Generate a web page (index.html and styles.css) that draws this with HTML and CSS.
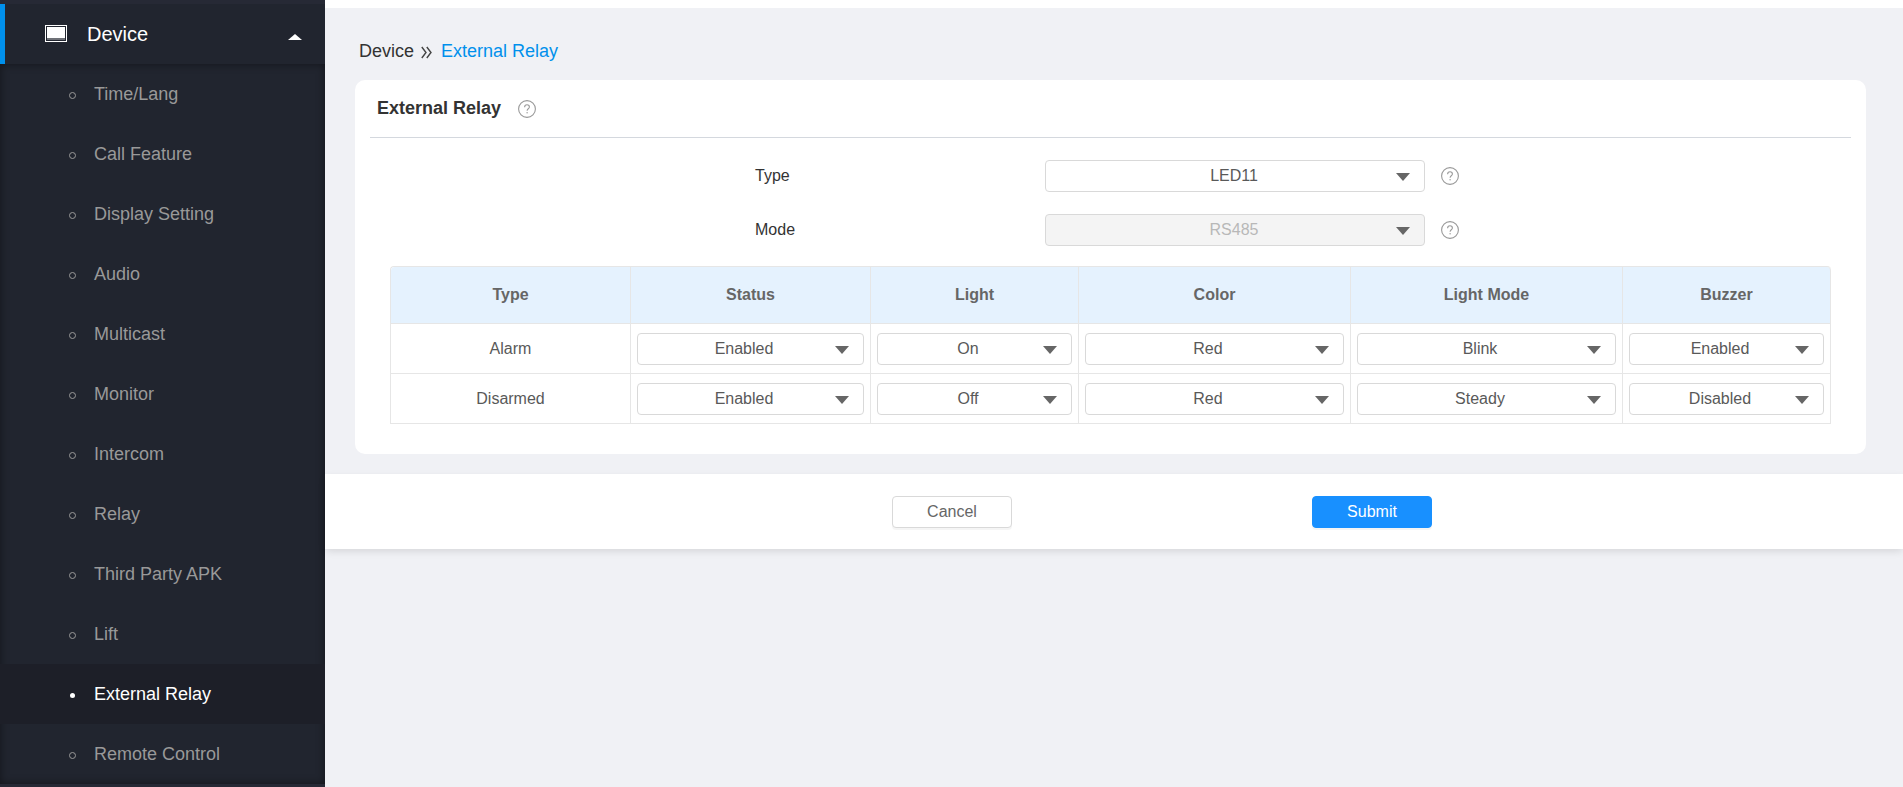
FILE: index.html
```html
<!DOCTYPE html>
<html lang="en">
<head>
  <meta charset="utf-8">
  <meta name="viewport" content="width=device-width, initial-scale=1">
  <title>External Relay</title>
  <link rel="stylesheet" href="styles.css">
</head>
<body>
  <svg class="defs" width="0" height="0">
    <symbol id="help" viewBox="0 0 18 18">
      <circle cx="9" cy="9" r="8.4" fill="none" stroke="#999" stroke-width="1.1"/>
      <path d="M6.6 7.2C6.6 5.6 7.6 4.8 9 4.8s2.4.9 2.4 2.2c0 1.7-2.3 1.9-2.3 3.8" fill="none" stroke="#999" stroke-width="1.1"/>
      <circle cx="9.1" cy="12.8" r=".7" fill="#999"/>
    </symbol>
  </svg>

  <aside class="sidebar">
    <div class="menu-title">
      <svg class="device-icon" width="22" height="17" viewBox="0 0 22 17">
        <rect x=".5" y=".5" width="21" height="16" fill="none" stroke="#fff"/>
        <rect x="2" y="2" width="18" height="11" fill="#fff"/>
        <path d="M2 14h18" stroke="#fff" stroke-opacity=".7"/>
      </svg>
      <span>Device</span>
      <i class="caret-up"></i>
    </div>
    <ul class="menu">
      <li>Time/Lang</li>
      <li>Call Feature</li>
      <li>Display Setting</li>
      <li>Audio</li>
      <li>Multicast</li>
      <li>Monitor</li>
      <li>Intercom</li>
      <li>Relay</li>
      <li>Third Party APK</li>
      <li>Lift</li>
      <li class="current">External Relay</li>
      <li>Remote Control</li>
    </ul>
  </aside>

  <main>
    <div class="topbar"></div>
    <nav class="breadcrumb">
      <span>Device</span>
      <svg width="11" height="13" viewBox="0 0 11 13"><path d="M.8 1l4.2 5.5L.8 12M5.8 1L10 6.5 5.8 12" fill="none" stroke="#444" stroke-width="1.4"/></svg>
      <a>External Relay</a>
    </nav>

    <section class="card">
      <header class="card-head">
        <h2>External Relay</h2>
        <svg class="help"><use href="#help"/></svg>
      </header>
      <div class="form-row">
        <label>Type</label>
        <div class="select"><span>LED11</span></div>
        <svg class="help"><use href="#help"/></svg>
      </div>
      <div class="form-row">
        <label>Mode</label>
        <div class="select disabled"><span>RS485</span></div>
        <svg class="help"><use href="#help"/></svg>
      </div>

      <table class="relay-table">
        <colgroup>
          <col class="w-240"><col class="w-240"><col class="w-208"><col class="w-272"><col class="w-272"><col class="w-208">
        </colgroup>
        <thead>
          <tr>
            <th>Type</th>
            <th>Status</th>
            <th>Light</th>
            <th>Color</th>
            <th>Light Mode</th>
            <th>Buzzer</th>
          </tr>
        </thead>
        <tbody>
          <tr>
            <td>Alarm</td>
            <td><div class="select"><span>Enabled</span></div></td>
            <td><div class="select"><span>On</span></div></td>
            <td><div class="select"><span>Red</span></div></td>
            <td><div class="select"><span>Blink</span></div></td>
            <td><div class="select"><span>Enabled</span></div></td>
          </tr>
          <tr>
            <td>Disarmed</td>
            <td><div class="select"><span>Enabled</span></div></td>
            <td><div class="select"><span>Off</span></div></td>
            <td><div class="select"><span>Red</span></div></td>
            <td><div class="select"><span>Steady</span></div></td>
            <td><div class="select"><span>Disabled</span></div></td>
          </tr>
        </tbody>
      </table>
    </section>

    <footer class="actions">
      <button class="btn">Cancel</button>
      <button class="btn primary">Submit</button>
    </footer>
  </main>
</body>
</html>
```
FILE: styles.css
```css
* {
  box-sizing: border-box;
}
body {
  display: flex;
  height: 100vh;
  margin: 0;
  overflow: hidden;
  background-color: #f0f1f5;
  color: #333;
  font-family: "Liberation Sans", Arial, sans-serif;
  font-size: 16px;
}
.defs {
  position: absolute;
}

/* sidebar */
.sidebar {
  flex: 0 0 325px;
  padding-top: 4px;
  background-color: #262935;
}
.menu-title {
  display: flex;
  align-items: center;
  height: 60px;
  padding: 0 23px 0 40px;
  border-left: 5px solid #0090ec;
  background-color: #21252f;
  color: #fff;
  font-size: 20px;
}
.menu-title span {
  margin-left: 20px;
}
.device-icon {
  margin-bottom: 2px;
}
.caret-up {
  margin: 5px 0 0 auto;
  border: 7px solid transparent;
  border-top: 0;
  border-bottom: 6px solid #fff;
}
.menu {
  margin: 0;
  padding: 0;
  list-style: none;
  background-color: #21252f;
  box-shadow: inset 0 0 9px rgba(0, 0, 0, 0.45);
}
.menu li {
  display: flex;
  align-items: center;
  height: 60px;
  padding-left: 69px;
  color: #999;
  font-size: 18px;
}
.menu li::before {
  content: "";
  width: 5px;
  height: 5px;
  margin: 3px 18px 0 0;
  border: 1px solid #999;
  border-radius: 50%;
}
.menu li.current {
  background-color: #1d1f28;
  color: #fff;
}
.menu li.current::before {
  border-color: transparent;
  background-color: #fff;
  background-clip: padding-box;
}

/* content */
main {
  flex: 1;
}
.topbar {
  height: 8px;
  background-color: #fff;
}
.breadcrumb {
  display: flex;
  align-items: center;
  height: 72px;
  padding: 30px 0 16px 34px;
  font-size: 18px;
}
.breadcrumb svg {
  margin: 2px 9px 0 7px;
}
.breadcrumb a {
  color: #0090ec;
}
.card {
  height: 374px;
  margin: 0 37px 0 30px;
  padding: 0 15px;
  border-radius: 10px;
  background-color: #fff;
}
.card-head {
  display: flex;
  align-items: center;
  height: 58px;
  margin-bottom: 22px;
  padding-left: 7px;
  border-bottom: 1px solid #d4d8de;
}
.card-head h2 {
  margin: 0 16.5px 1px 0;
  font-size: 18px;
}
.help {
  width: 18px;
  height: 18px;
}
.form-row {
  display: flex;
  align-items: center;
  height: 32px;
  margin-bottom: 22px;
  padding-left: 385px;
}
.form-row label {
  width: 290px;
  padding-bottom: 1px;
}
.form-row .select {
  width: 380px;
  margin-right: 16px;
}
.form-row .select span {
  padding-left: 12px;
}

.select {
  display: flex;
  align-items: center;
  height: 32px;
  padding-right: 14px;
  border: 1px solid #d9d9d9;
  border-radius: 4px;
  background-color: #fff;
  color: #595959;
}
.select span {
  flex: 1;
  padding: 0 0 1px 1px;
  text-align: center;
}
.select::after {
  content: "";
  width: 14px;
  height: 8px;
  margin: 2px 0 0 -14px;
  background-color: #666;
  clip-path: polygon(0 0, 100% 0, 50% 100%);
}
.select.disabled {
  background-color: #f4f4f4;
}
.select.disabled span {
  color: #b8b8b8;
}

.relay-table {
  width: 1441px;
  margin: -2px 0 0 20px;
  border: 1px solid #e6e6e6;
  border-width: 1px 0 0 1px;
  border-radius: 4px 4px 0 0;
  border-spacing: 0;
  table-layout: fixed;
  color: #595959;
  text-align: center;
}
.w-208 {
  width: 208px;
}
.w-240 {
  width: 240px;
}
.w-272 {
  width: 272px;
}
.relay-table th {
  height: 57px;
  padding: 0 0 1px;
  border: 1px solid #e6e6e6;
  border-width: 0 1px 1px 0;
  background-color: #e5f2fe;
  color: #666;
}
.relay-table th:first-child {
  border-top-left-radius: 4px;
}
.relay-table th:last-child {
  border-top-right-radius: 4px;
}
.relay-table td {
  height: 50px;
  padding: 1px 6px 0;
  border: 1px solid #e6e6e6;
  border-width: 0 1px 1px 0;
}

/* bottom buttons */
.actions {
  display: flex;
  justify-content: center;
  gap: 300px;
  height: 75px;
  margin-top: 20px;
  padding: 22px 0 0 96px;
  background-color: #fff;
  box-shadow: 0 3px 8px -1px rgba(0, 0, 0, 0.12);
}
.btn {
  width: 120px;
  height: 32px;
  padding: 0 0 1px;
  border: 1px solid #d9d9d9;
  border-radius: 4px;
  background-color: #fff;
  box-shadow: 0 2px 0 rgba(0, 0, 0, 0.04);
  color: #666;
  font: inherit;
}
.btn.primary {
  border-color: #1890ff;
  background-color: #1890ff;
  color: #fff;
}
```
